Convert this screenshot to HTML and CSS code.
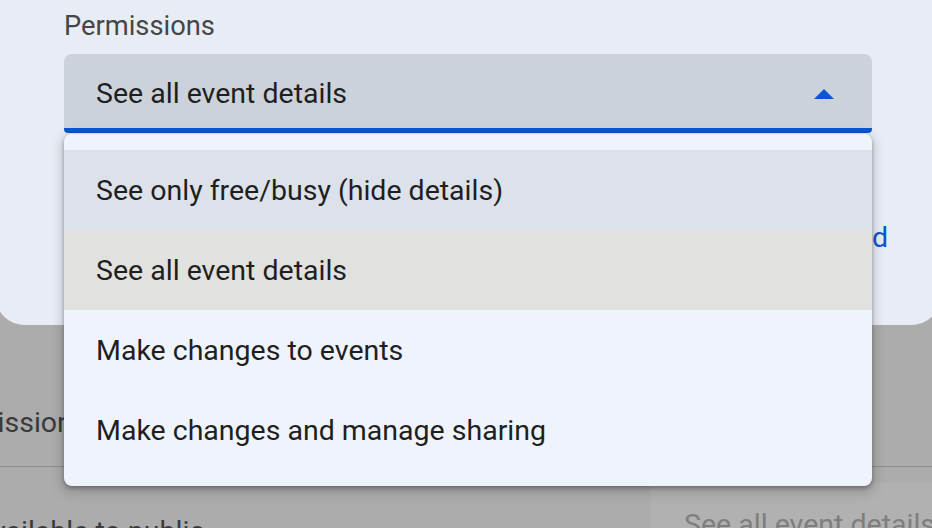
FILE: index.html
```html
<!DOCTYPE html>
<html lang="en">
<head>
<meta charset="utf-8">
<title>Permissions</title>
<link rel="stylesheet" href="styles.css">
</head>
<body>
<div class="page">
  <div class="table">
    <div class="thead"><span class="th">Permissions</span></div>
    <div class="trow">
      <div class="cell-name">Available to public</div>
      <div class="cell-perm"><span>See all event details</span></div>
    </div>
  </div>
</div>

<div class="dialog">
  <div class="field-label">Permissions</div>
  <div class="select">
    <span class="select-value">See all event details</span>
    <svg class="arrow" width="20" height="10" viewBox="0 0 20 10" aria-hidden="true"><path d="M0 10 L10 0 L20 10 Z"/></svg>
  </div>
  <div class="actions"><span class="link">Send</span></div>
</div>

<div class="menu" role="listbox">
  <div class="item item-hover">See only free/busy (hide details)</div>
  <div class="item item-selected">See all event details</div>
  <div class="item">Make changes to events</div>
  <div class="item">Make changes and manage sharing</div>
</div>
</body>
</html>
```

FILE: styles.css
```css
html, body {
  margin: 0;
  padding: 0;
}

body {
  width: 932px;
  height: 528px;
  overflow: hidden;
  position: relative;
  background: #acacac;
  font-family: Roboto, "Noto Sans", "Liberation Sans", sans-serif;
  font-size: 28.5px;
  color: #1f1f1f;
}

/* underlying page (behind scrim) */
.page {
  margin-left: -70px;
  padding-top: 403px;
}

.thead {
  line-height: 40px;
  height: 63px;
  border-bottom: 1px solid #8e8e8e;
  color: #3a3a3a;
}

.trow {
  display: flex;
  padding-top: 16px;
  color: #3a3a3a;
}

.cell-name {
  flex: 0 0 auto;
  width: 677px;
  padding-left: 44px;
  padding-top: 29px;
  line-height: 40px;
  white-space: nowrap;
}

.cell-perm {
  flex: 0 0 auto;
  background: #b1b1b1;
  padding: 22px 33px 0;
  line-height: 40px;
  height: 80px;
  color: #7e7e7e;
  white-space: nowrap;
}

/* dialog */
.dialog {
  position: absolute;
  left: -4px;
  right: -8px;
  top: -40px;
  height: 365px;
  box-sizing: border-box;
  padding: 48px 52px 0 68px;
  background: #e8ecf5;
  border-radius: 28px;
}

.field-label {
  font-size: 27.3px;
  line-height: 36px;
  color: #444746;
  margin-bottom: 10px;
}

.select {
  width: 808px;
  height: 79px;
  box-sizing: border-box;
  display: flex;
  align-items: center;
  padding: 5px 38px 0 32px;
  background: #ccd2da;
  border-bottom: 5px solid #0b57d0;
  border-radius: 8px 8px 4px 4px;
}

.select-value {
  flex: 1;
  color: #1f1f1f;
}

.arrow {
  fill: #0b57d0;
  display: block;
}

.actions {
  display: flex;
  justify-content: flex-end;
  margin-top: 85px;
  line-height: 40px;
}

.link {
  color: #0b57d0;
}

/* dropdown menu */
.menu {
  position: absolute;
  left: 64px;
  top: 134px;
  width: 808px;
  padding: 16px 0;
  background: #eff3fb;
  border-radius: 8px;
  box-shadow: 0 4px 12px 3px rgba(0, 0, 0, 0.15), 0 2px 4px rgba(0, 0, 0, 0.3);
}

.item {
  height: 80px;
  display: flex;
  align-items: center;
  padding-left: 32px;
  color: #1f1f1f;
  white-space: nowrap;
}

.item-hover {
  background: #dde1ea;
}

.item-selected {
  background: #e1e1df;
}
```
